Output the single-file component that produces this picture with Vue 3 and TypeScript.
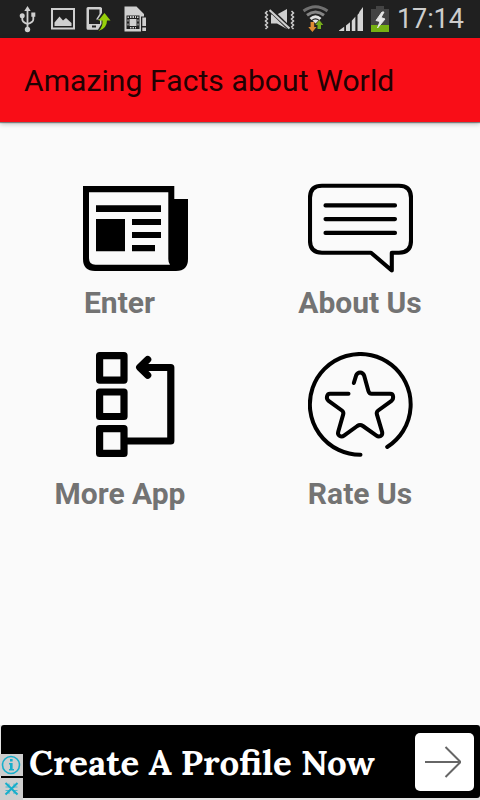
<script setup lang="ts">
interface Tile {
  id: string
  label: string
}

const rows: Tile[][] = [
  [
    { id: 'enter', label: 'Enter' },
    { id: 'about', label: 'About Us' },
  ],
  [
    { id: 'more', label: 'More App' },
    { id: 'rate', label: 'Rate Us' },
  ],
]
</script>

<template>
  <div class="screen">
    <header class="status">
      <svg class="status-icons" width="396" height="38" viewBox="0 0 396 38">
        <!-- usb -->
        <g fill="none" stroke="#cfcfcf" stroke-width="1.8">
          <path d="M27.5 10V29M22.3 16v3.5q0 2.5 5 4.5M33.3 15v4.500q0 2.500-5.500 4.500" />
        </g>
        <path d="M27.500 6l-3.200 5h6.400zM31.300 12.500h4v4.300h-4z" fill="#cfcfcf" />
        <circle cx="22.200" cy="15.800" r="2.500" fill="#cfcfcf" />
        <circle cx="27.500" cy="29.500" r="2.700" fill="#cfcfcf" />
        <!-- picture -->
        <rect x="52" y="9" width="22" height="19.500" fill="none" stroke="#cfcfcf" stroke-width="2" />
        <path d="M54.500 26v-3.500l5-6 3.500 4 3-2.500 5.500 5V26z" fill="#cfcfcf" />
        <!-- phone with arrow -->
        <path d="M88 7h12.500l1.500 1v5l-4 6h3.500v5l-3.500 5.700H88a1.500 1.500 0 0 1-1.500-1.500V8.500A1.500 1.500 0 0 1 88 7z" fill="#cfcfcf" />
        <path d="M89 9.500h10.500V14l-3.500 5.500h4V24H89z" fill="#202020" />
        <path d="M92 25.500h4v2h-4z" fill="#202020" />
        <path d="M104.500 13l6 7.500h-3.500q0 8-8.500 10.500 4.500-4 4-10.500h-4z" fill="#97d00b" />
        <!-- sim card -->
        <path d="M124.500 6.500h12l7.500 7.500v2.500h-3V31.500h-16.500z" fill="#cfcfcf" />
        <path d="M126.500 15.500h13v13.500h-13z" fill="#202020" />
        <path d="M129.500 19h7v7h-7zM127.500 16.500h1.500v1.500h-1.500zM137 16.500h1.500v1.500h-1.500zM127.500 19.500h1v2h-1zM137.500 19.500h1v2h-1zM127.500 23.500h1v2h-1zM137.500 23.500h1v2h-1zM130 16h1.500v2h-1.500zM132.500 16h1.500v2h-1.500zM135 16h1v2h-1zM130 27h1.500v1.500h-1.500zM132.500 27h1.500v1.500h-1.500zM135 27h1v1.500h-1z" fill="#cfcfcf" />
        <path d="M142.300 17.500h3.700v8.500h-3.700zM142.300 27.500h3.700V31h-3.700z" fill="#cfcfcf" />
        <!-- muted, vibrating -->
        <g fill="none" stroke="#cfcfcf" stroke-width="1.500">
          <path d="M267.500 11l-2 2 2 2-2 2 2 2-2 2 2 2-2 2 2 2-2 2M291.500 11l2 2-2 2 2 2-2 2 2 2-2 2 2 2-2 2 2 2" />
        </g>
        <path d="M271 14.500h6l10-5.500v20l-10-5.500h-6z" fill="#cfcfcf" />
        <path d="M270 9.500l20 19.500" stroke="#202020" stroke-width="4.500" />
        <path d="M269.500 10l20 18.500" stroke="#cfcfcf" stroke-width="2.200" />
        <!-- wifi -->
        <g fill="none" stroke-width="3">
          <path d="M303.500 11q12-8.500 24 0" stroke="#707070" />
          <path d="M307 15.200q8.500-6.500 17 0" stroke="#858585" />
          <path d="M310.500 19q5-4.500 10 0" stroke="#e2e2e2" />
        </g>
        <path d="M312.500 20.500q3-2 6 0l-3 3z" fill="#e2e2e2" />
        <path d="M310.600 22h3.600v5h2.300l-4.100 5-4.100-5h2.300z" fill="#df8b32" />
        <path d="M319.300 20l4 5h-2.300v4h-3.500v-4h-2.200z" fill="#75ac1b" />
        <!-- signal -->
        <path d="M339 31v-.5l5.500-4V31zM346 25.500l4-3.200V31h-4zM351.500 21l4-4.500V31h-4zM357.300 15l4-4.200V31h-4z" fill="#d5d5d5" />
        <path d="M359.300 12l3.700-5v24h-3.700z" fill="#d5d5d5" />
        <path d="M345.200 20v12M350.800 17v15M356.500 11v21" stroke="#202020" stroke-width="1.600" />
        <!-- battery -->
        <path d="M371 9h5V6h8v3h5v23h-18z" fill="#444" />
        <path d="M371 25h18v7h-18z" fill="#75b013" />
        <path d="M382 12l-6 8.500 4 1-2.500 6.500 7.500-9-4-1.500 3-5.500z" fill="#e6e6e6" stroke="#e6e6e6" stroke-width="1" />
      </svg>
      <span class="clock">17:14</span>
    </header>

    <div class="appbar"><h1>Amazing Facts about World</h1></div>

    <main class="menu">
      <div v-for="(row, i) in rows" :key="i" class="row">
        <div v-for="tile in row" :key="tile.id" class="tile" :class="tile.id">
          <svg v-if="tile.id === 'enter'" class="icon" viewBox="83 175 105 105">
            <path d="M83 186h91.300v13H188v60q0 12-12 12H95q-12 0-12-12z" />
            <path d="M89 192.300h79.300V259q0 4 1.700 5.700H95.500q-6.500 0-6.500-6.500z" fill="#fafafa" />
            <path d="M96 205.300h65v6.700H96zM96 219h29v32.300H96zM132 219h29v6h-29zM132 232h29v6h-29zM132 245h23v6.300h-23z" />
          </svg>
          <svg v-else-if="tile.id === 'about'" class="icon" viewBox="308 175 105 105">
            <g fill="none" stroke="#000" stroke-width="4.100" stroke-linecap="round" stroke-linejoin="round">
              <path d="M322 185.700h77q12 0 12 12v43q0 12-12 12h-7.200v17.800L371 252.700h-49q-12 0-12-12v-43q0-12 12-12z" />
              <path d="M325.500 205.400h69.500M325.500 219.100h69.500M325.500 232.900h69.500" />
            </g>
          </svg>
          <svg v-else-if="tile.id === 'more'" class="icon" viewBox="83 352 105 105">
            <g fill="none" stroke="#000" stroke-width="7.200" stroke-linejoin="round">
              <path d="M99.600 355.600h24.400v24.500H99.600zM99.600 392h24.400v24.500H99.600zM99.600 428.700h24.400v24.700H99.600z" />
              <path d="M124 441h46.800v-73.500H140" />
              <path d="M147.700 359.500l-8 7.900 8 7.900" stroke-linecap="round" />
            </g>
          </svg>
          <svg v-else class="icon" viewBox="308 352 105 105">
            <g fill="none" stroke="#000" stroke-width="4" stroke-linecap="round" stroke-linejoin="round">
              <path d="M360.500 454.800A50.400 50.400 0 1 1 387.200 447" />
              <path d="M353.800 383l2.200-7.200q1.200-3.200 4.100-3.200t4.100 3.200l4.200 15.200q.8 2.800 3.200 2.800h18.600q2.600 0 2.900 2.700t-1.600 4.300l-13.300 9.700q-2 1.500-1.300 3.900l5.200 17.500q.8 2.900-1.400 4.100t-4.200-.3l-13.600-9.700q-2.800-1.900-5.600 0l-13.300 9.700q-2.200 1.600-4.400.2t-1.400-4l5-17.500q.7-2.400-1.300-3.900l-13.300-9.700q-2.200-1.600-1.600-4.300t2.900-2.700H348.500" />
            </g>
          </svg>
          <span class="label">{{ tile.label }}</span>
        </div>
      </div>
    </main>

    <footer class="ad">
      <div class="banner">
        <span class="headline">Create A Profile Now</span>
        <div class="go">
          <svg width="36" height="34" viewBox="0 0 36 34">
            <path d="M0 17h35M20.500 2l15 15-15 15" fill="none" stroke="#666" stroke-width="2" />
          </svg>
        </div>
      </div>
      <div class="choices">
        <svg width="23" height="22" viewBox="0 0 23 22">
          <circle cx="11" cy="11" r="8.500" fill="none" stroke="#17aecb" stroke-width="1.600" />
          <path d="M10 5h2.600v2.500H10zM9 9h3.600v6H14v1.500H9V15h1v-4.500H9z" fill="#17aecb" />
        </svg>
        <svg width="23" height="22" viewBox="0 0 23 22">
          <path d="M5.500 5l12 11.500M17.500 5l-12 11.500" stroke="#17aecb" stroke-width="2" />
          <path d="M9 5.500v3.500H5.500M14 5.500v3.500h3.500M9 16v-3.500H5.500M14 16v-3.500h3.500" fill="none" stroke="#17aecb" stroke-width=".7" />
        </svg>
      </div>
    </footer>
  </div>
</template>

<style>
body {
  margin: 0;
  background: #fafafa;
}
</style>

<style scoped>
.screen {
  display: flex;
  flex-direction: column;
  width: 480px;
  height: 800px;
  overflow: hidden;
  background: #fafafa;
  font-family: Roboto, "Liberation Sans", sans-serif;
}
.status {
  display: flex;
  height: 38px;
  flex: none;
  background: #202020;
}
.status-icons {
  flex: none;
}
.clock {
  padding-left: 1px;
  color: #cdcdcd;
  font-size: 27px;
  line-height: 38px;
  letter-spacing: -0.1px;
  white-space: nowrap;
}
.appbar {
  display: flex;
  align-items: center;
  box-sizing: border-box;
  flex: none;
  height: 84px;
  padding: 2px 0 0 24px;
  background: #f90d17;
  box-shadow: 0 1px 1px rgba(0, 0, 0, 0.4), 0 2px 5px rgba(0, 0, 0, 0.25);
}
h1 {
  margin: 0;
  color: #210203;
  font-size: 30px;
  font-weight: 400;
  line-height: 40px;
  letter-spacing: 0.1px;
  white-space: nowrap;
}
.menu {
  flex: 1;
  padding-top: 53px;
}
.row {
  display: flex;
  height: 177px;
}
.tile {
  display: flex;
  flex-direction: column;
  align-items: center;
  width: 240px;
}
.tile:first-child {
  width: 239px;
  padding-right: 1px;
}
.row .tile:first-child .icon {
  margin-left: 32px;
}
.icon {
  display: block;
  flex: none;
  width: 105px;
  height: 105px;
}
.label {
  color: #737373;
  font-size: 30px;
  font-weight: 700;
  line-height: 36px;
  margin-top: 5px;
  white-space: nowrap;
}
.row:last-child .label {
  margin-top: 19px;
}
.more .label {
  padding-left: 1px;
}
.ad {
  display: grid;
  flex: none;
  height: 75px;
  background: #e4e4e4;
}
.banner,
.choices {
  grid-area: 1 / 1;
}
.banner {
  display: flex;
  align-items: center;
  justify-content: space-between;
  box-sizing: border-box;
  height: 73px;
  margin-left: 1px;
  padding: 0 6px 0 28px;
  border-radius: 3px;
  background: #000;
}
.headline {
  padding-top: 2px;
  color: #fff;
  font-family: Lora, "Liberation Serif", serif;
  font-size: 34.8px;
  font-weight: 700;
  line-height: 44px;
  white-space: nowrap;
}
.go {
  display: flex;
  align-items: center;
  justify-content: center;
  box-sizing: border-box;
  width: 59px;
  height: 58px;
  padding-right: 4px;
  border-radius: 5px;
  background: #fff;
}
.choices {
  display: flex;
  flex-direction: column;
  align-self: end;
  justify-self: start;
  gap: 2px;
}
.choices svg {
  display: block;
  background: #cecece;
}
</style>
